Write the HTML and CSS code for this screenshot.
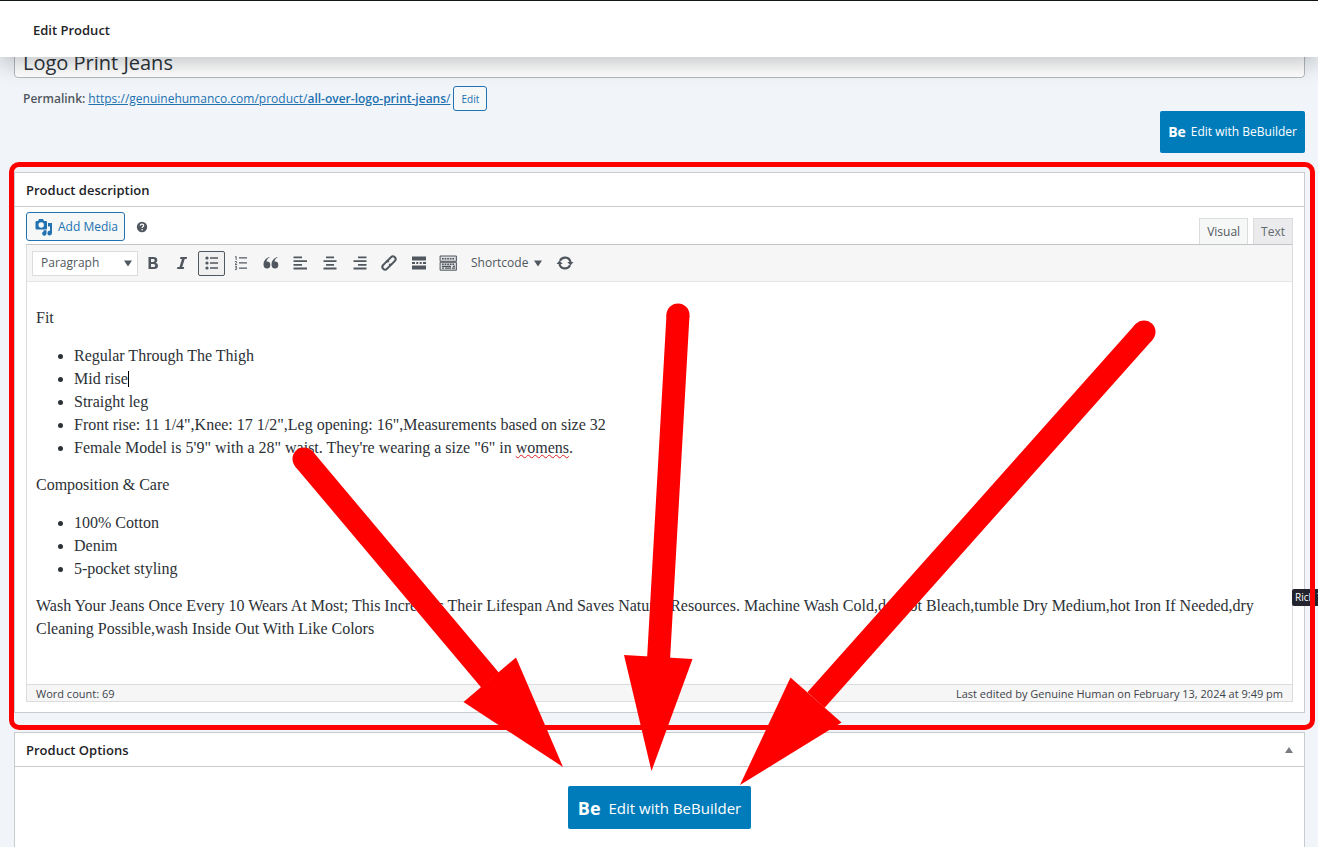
FILE: index.html
```html
<!DOCTYPE html>
<html lang="en">
<head>
<meta charset="utf-8">
<title>Edit Product</title>
<link rel="stylesheet" href="styles.css">
</head>
<body>
<div class="page">
<header class="topbar"><h1>Edit Product</h1></header>
<main class="content">
  <input class="title-input" type="text" aria-label="Product name" value="Logo Print Jeans">
  <div class="permalink">
    <strong>Permalink:</strong>
    <a href="#">https://genuinehumanco.com/product/<b>all-over-logo-print-jeans</b>/</a>
    <button class="btn btn-small" type="button">Edit</button>
  </div>
  <div class="builder-row">
    <button class="be-button" type="button"><b>Be</b><span>Edit with BeBuilder</span></button>
  </div>

  <section class="postbox description">
    <h2 class="postbox-title">Product description</h2>
    <div class="editor-wrap">
      <div class="editor-tools">
        <div class="media-buttons">
          <button class="btn btn-media" type="button">
            <svg width="18" height="18" viewBox="0 0 18 18" fill="currentColor"><path fill-rule="evenodd" d="M1.500 3H3L4 1H8L9 3H11Q12 3 12 4V10.500Q12 11.500 11 11.500H1.500Q.5 11.500 .5 10.500V4Q.5 3 1.500 3ZM6.200 4.300A2.700 2.700 0 1 0 6.200 9.700A2.700 2.700 0 1 0 6.200 4.300Z"/><path d="M13 5H17V15A2.300 2.300 0 1 1 15 12.800V8.500H13Z"/><path d="M8.500 12.300H11.500V15.500A2.200 2.200 0 1 1 8.500 13.500Z"/></svg>
            Add Media
          </button>
          <svg class="help" width="12" height="12" viewBox="0 0 12 12"><circle cx="6" cy="6" r="5.200" fill="#50575e"/><path d="M4.300 4.700Q4.400 3.200 6 3.200T7.700 4.600Q7.700 5.300 6.900 5.700T6.100 7" fill="none" stroke="#fff" stroke-width="1.200"/><circle cx="6.100" cy="8.700" r=".8" fill="#fff"/></svg>
        </div>
        <div class="tabs">
          <button class="tab active" type="button">Visual</button>
          <button class="tab" type="button">Text</button>
        </div>
      </div>
      <div class="editor">
        <div class="toolbar">
          <div class="select-wrap">
            <select aria-label="Format"><option>Paragraph</option></select>
            <svg class="caret" width="8" height="7" viewBox="0 0 8 7"><path d="M0 .5H8L4 6.500Z" fill="currentColor"/></svg>
          </div>
          <div class="tools">
            <button type="button" aria-label="Bold"><svg width="20" height="20" viewBox="0 0 20 20"><path fill-rule="evenodd" d="M5.500 4H10.500Q14.300 4 14.300 7.200Q14.300 9 12.700 9.700Q15 10.300 15 12.700Q15 16 11 16H5.500ZM8 6.100V8.900H10Q11.700 8.900 11.700 7.500T10 6.100ZM8 10.900V13.900H10.300Q12.300 13.900 12.300 12.400T10.300 10.900Z"/></svg></button>
            <button type="button" aria-label="Italic"><svg width="20" height="20" viewBox="0 0 20 20"><path d="M8.500 4H15L14.700 5.900H12.700L10.200 14.100H12.200L11.700 16H5L5.400 14.100H7.500L10 5.900H8Z"/></svg></button>
            <button class="pressed" type="button" aria-label="Bulleted list"><svg width="20" height="20" viewBox="0 0 20 20"><circle cx="5" cy="5" r="1.600"/><circle cx="5" cy="10" r="1.600"/><circle cx="5" cy="15" r="1.600"/><path d="M8 4.200H16V5.800H8ZM8 9.200H16V10.800H8ZM8 14.200H16V15.800H8Z"/></svg></button>
            <button type="button" aria-label="Numbered list"><svg width="20" height="20" viewBox="0 0 20 20"><path d="M8 4.200H16V5.500H8ZM8 9.300H16V10.600H8ZM8 14.400H16V15.700H8Z"/><path d="M4 4.200L5.200 3.400V7M3.800 8.700Q5.800 7.700 5.800 9.200Q5.800 10 4 11.400H6.200M4 13.200Q5.900 12.800 5.700 14T4.600 14.900Q6 14.900 5.800 16T3.900 16.500" fill="none" stroke="currentColor" stroke-width=".9"/></svg></button>
            <button type="button" aria-label="Blockquote"><svg width="20" height="20" viewBox="0 0 20 20"><path d="M8.700 4.300Q5.700 5.600 5.400 8.600Q9.300 8.200 9.300 12Q9.300 15.500 6 15.500Q2.500 15.500 2.500 11.200Q2.500 6 8.200 3.900ZM16.700 4.300Q13.700 5.600 13.400 8.600Q17.300 8.200 17.300 12Q17.300 15.500 14 15.500Q10.500 15.500 10.500 11.200Q10.500 6 16.200 3.900Z"/></svg></button>
            <button type="button" aria-label="Align left"><svg width="20" height="20" viewBox="0 0 20 20"><path d="M3.500 3.500H12V5.300H3.500ZM3.500 7.200H17V9H3.500ZM3.500 10.900H12V12.700H3.500ZM3.500 14.600H17V16.400H3.500Z"/></svg></button>
            <button type="button" aria-label="Align center"><svg width="20" height="20" viewBox="0 0 20 20"><path d="M6 3.500H14V5.300H6ZM3.500 7.200H16.500V9H3.500ZM6 10.900H14V12.700H6ZM3.500 14.600H16.500V16.400H3.500Z"/></svg></button>
            <button type="button" aria-label="Align right"><svg width="20" height="20" viewBox="0 0 20 20"><path d="M8 3.500H16.500V5.300H8ZM3.500 7.200H16.500V9H3.500ZM8 10.900H16.500V12.700H8ZM3.500 14.600H16.500V16.400H3.500Z"/></svg></button>
            <button type="button" aria-label="Insert link"><svg width="20" height="20" viewBox="0 0 20 20"><g transform="rotate(-45 10 10)" fill="none" stroke="currentColor" stroke-width="2"><path d="M8.500 7.300H15.500A2.700 2.700 0 0 1 15.500 12.700H11.500A2.700 2.700 0 0 1 9 11"/><path d="M11.500 12.700H4.500A2.700 2.700 0 0 1 4.500 7.300H8.500A2.700 2.700 0 0 1 11 9"/></g></svg></button>
            <button type="button" aria-label="Read more"><svg width="20" height="20" viewBox="0 0 20 20"><path d="M3 3.500H17V7.500H3ZM3 9.100H6V10.900H3ZM7.300 9.100H9.300V10.900H7.300ZM10.700 9.100H12.700V10.900H10.700ZM14 9.100H17V10.900H14ZM3 12.500H17V16.500H3Z"/></svg></button>
            <button type="button" aria-label="Toggle toolbar"><svg width="20" height="20" viewBox="0 0 20 20"><path d="M2.100 3H18.400V8.300H2.100ZM2.100 9.300H18.400V17.200H2.100Z" fill="#dcdee0" stroke="currentColor"/><path d="M4 5.700H17M4 11.300H17" fill="none" stroke="currentColor" stroke-width="1.600" stroke-dasharray="1.700 .9"/><path d="M4 13.300H13M4 15.200H6M7 15.200H13M14 15.200H17M15 13.300H17" fill="none" stroke="currentColor" stroke-width="1.200"/></svg></button>
          </div>
          <button class="shortcode" type="button">Shortcode <svg width="8" height="7" viewBox="0 0 8 7"><path d="M0 .5H8L4 6.500Z" fill="currentColor"/></svg></button>
          <button class="refresh" type="button" aria-label="Refresh"><svg width="20" height="20" viewBox="0 0 20 20"><path d="M5 7.700A5.600 5.600 0 0 1 15.500 9M15 12.300A5.600 5.600 0 0 1 4.500 11" fill="none" stroke="currentColor" stroke-width="2.200"/><path d="M12.300 9H18.500L15.500 12.600ZM7.700 11H1.500L4.500 7.400Z"/></svg></button>
        </div>
        <div class="document" contenteditable="true" spellcheck="false" role="textbox" aria-label="Product description">
          <p>Fit</p>
          <ul>
            <li>Regular Through The Thigh</li>
            <li>Mid rise<span class="text-cursor"></span></li>
            <li>Straight leg</li>
            <li>Front rise: 11 1/4",Knee: 17 1/2",Leg opening: 16",Measurements based on size 32</li>
            <li>Female Model is 5'9" with a 28" waist. They're wearing a size "6" in <span class="misspelled">womens</span>.</li>
          </ul>
          <p>Composition &amp; Care</p>
          <ul>
            <li>100% Cotton</li>
            <li>Denim</li>
            <li>5-pocket styling</li>
          </ul>
          <p>Wash Your Jeans Once Every 10 Wears At Most; This Increases Their Lifespan And Saves Natural Resources. Machine Wash Cold,do Not Bleach,tumble Dry Medium,hot Iron If Needed,dry Cleaning Possible,wash Inside Out With Like Colors</p>
        </div>
        <div class="statusbar"><span>Word count: 69</span><span>Last edited by Genuine Human on February 13, 2024 at 9:49 pm</span></div>
        <div class="tooltip">Rich Text Area</div>
      </div>
    </div>
    <div class="highlight"></div>
  </section>

  <section class="postbox options">
    <h2 class="postbox-title">Product Options
      <button class="toggle" type="button" aria-label="Toggle panel"><svg width="8" height="6" viewBox="0 0 8 6"><path d="M0 6H8L4 0Z" fill="currentColor"/></svg></button>
    </h2>
    <div class="options-body">
      <button class="be-button large" type="button"><b>Be</b><span>Edit with BeBuilder</span></button>
    </div>
  </section>
</main>
<svg class="arrows" width="1318" height="847" viewBox="0 0 1318 847" aria-hidden="true">
  <path d="M304 459L490 680M678 315L658.500 660M1144 332L816 700" stroke="#f00" stroke-width="23"/>
  <g fill="#f00">
    <circle cx="304" cy="459" r="11.500"/>
    <circle cx="678" cy="315" r="11.500"/>
    <circle cx="1144" cy="332" r="11.500"/>
    <path d="M563 767L463.500 702L516 657.500Z"/>
    <path d="M651.500 771L624 655L692.500 659Z"/>
    <path d="M740 785L790.500 677.500L841.500 722.500Z"/>
  </g>
</svg>
</div>
</body>
</html>
```
FILE: styles.css
```css
* { box-sizing: border-box; }

body {
  margin: 0;
  background: #f1f5f9;
  color: #3c434a;
  font: 12px/18px "Open Sans", "Noto Sans", sans-serif;
}

h1, h2, p, ul { margin: 0; }

button, input, select {
  font: inherit;
  color: inherit;
  margin: 0;
}

.page {
  position: relative;
  min-height: 100vh;
  overflow: hidden;
}

.topbar {
  position: absolute;
  top: 0;
  left: 0;
  right: 0;
  z-index: 2;
  display: flex;
  align-items: center;
  height: 57px;
  padding: 1px 33px 0;
  background: #fff;
  border-top: 1px solid #101517;
  box-shadow: 0 6px 22px rgba(0, 10, 20, .25);
}

.topbar h1 {
  font-size: 13px;
  font-weight: 600;
  color: #1d2327;
}

.content { padding: 44px 13px 0 14px; }

.title-input {
  display: block;
  width: 100%;
  height: 34px;
  padding: 2px 8px 0;
  border: 1px solid #b5b9be;
  border-radius: 4px;
  background: #fff;
  color: #2c3338;
  font-size: 20px;
}

.permalink {
  display: flex;
  align-items: center;
  gap: 3px;
  height: 25px;
  margin-top: 8px;
  padding-left: 9px;
  color: #50575e;
}

.permalink strong,
.permalink b { font-weight: 600; }
.permalink a { color: #2271b1; }

.btn {
  display: flex;
  align-items: center;
  justify-content: center;
  border: 1px solid #2271b1;
  border-radius: 3px;
  background: #f6f7f7;
  color: #2271b1;
}

.btn-small {
  height: 25px;
  padding: 0 7px;
  font-size: 10px;
}

.builder-row {
  display: flex;
  justify-content: flex-end;
}

.be-button {
  display: flex;
  align-items: center;
  justify-content: center;
  gap: 5px;
  height: 42px;
  padding: 0 8px;
  border: 0;
  border-radius: 2px;
  background: #007cba;
  color: #fff;
}

.be-button b { font-size: 14px; }

.be-button.large {
  height: 43px;
  padding: 0 10px;
  gap: 8px;
  font-size: 15px;
}

.be-button.large b { font-size: 18px; }

.postbox {
  position: relative;
  margin-top: 19px;
  border: 1px solid #c9cccf;
  background: #fff;
}

.postbox-title {
  display: flex;
  align-items: center;
  justify-content: space-between;
  height: 34px;
  padding: 0 11px;
  border-bottom: 1px solid #c9cccf;
  color: #1d2327;
  font-size: 13px;
  font-weight: 600;
}

.editor-wrap { padding: 5px 11px 10px; }

.editor-tools {
  display: flex;
  justify-content: space-between;
  align-items: flex-start;
}

.media-buttons {
  display: flex;
  align-items: center;
  gap: 11px;
  height: 32px;
  padding-bottom: 3px;
}

.btn-media {
  gap: 5px;
  height: 29px;
  padding: 0 6px 0 8px;
}

.tabs {
  display: flex;
  gap: 5px;
  padding-top: 6px;
}

.tab {
  height: 26px;
  padding: 0 7px;
  border: 1px solid #dcdcde;
  border-bottom: 0;
  background: #ebebed;
  color: #646970;
}

.tab.active {
  background: #f6f7f7;
  color: #50575e;
}

.editor {
  position: relative;
  border: 1px solid #dcdcde;
  border-top-color: #c3c4c7;
}

.toolbar {
  display: flex;
  align-items: center;
  height: 37px;
  padding-left: 5px;
  border-bottom: 1px solid #e4e5e7;
  background: #f6f6f6;
  color: #50575e;
}

.select-wrap { position: relative; }

.select-wrap select {
  appearance: none;
  width: 106px;
  height: 25px;
  padding: 0 8px;
  border: 1px solid #dcdcde;
  border-radius: 0;
  background: #fff;
}

.caret {
  position: absolute;
  top: 9px;
  right: 6px;
  pointer-events: none;
}

.tools {
  display: grid;
  grid-template-columns: repeat(11, 1fr);
  justify-items: center;
  width: 325px;
}

.toolbar button {
  display: flex;
  align-items: center;
  justify-content: center;
  height: 25px;
  padding: 0;
  border: 1px solid transparent;
  background: none;
  color: #50575e;
}

.tools button { width: 27px; }

.toolbar button svg { fill: currentColor; }

.toolbar .pressed {
  border-color: #50575e;
  border-radius: 2px;
  background: #f0f0f1;
}

.toolbar .shortcode {
  gap: 6px;
  margin: 0 11px 0 7px;
}

.document {
  min-height: 402px;
  padding: 24px 9px;
  outline: 0;
  color: #2c3136;
  font: 16px/23px "Liberation Serif", serif;
}

.document p { margin-bottom: 15px; }

.document ul {
  margin-bottom: 14px;
  padding-left: 38px;
}

.text-cursor {
  display: inline-block;
  width: 1px;
  height: 16px;
  background: #000;
  vertical-align: text-bottom;
}

.misspelled {
  text-decoration: underline wavy #d22 1px;
}

.statusbar {
  display: flex;
  justify-content: space-between;
  height: 17px;
  padding: 0 9px;
  border-top: 1px solid #dcdcde;
  background: #f6f6f6;
  font-size: 11px;
  line-height: 17px;
}

.tooltip {
  position: absolute;
  top: 344px;
  left: 100%;
  padding: 0 3px;
  border-radius: 2px;
  background: #24242e;
  color: #fff;
  font-size: 10px;
  line-height: 17px;
  white-space: nowrap;
}

.highlight {
  position: absolute;
  top: -11px;
  right: -11px;
  bottom: -18px;
  left: -6px;
  border: 5px solid #f00;
  border-radius: 10px;
  pointer-events: none;
}

.toggle {
  display: flex;
  padding: 0;
  border: 0;
  background: none;
  color: #787c82;
}

.options-body {
  display: flex;
  justify-content: center;
  padding: 19px 11px;
}

.arrows {
  position: absolute;
  top: 0;
  left: 0;
  z-index: 1;
  pointer-events: none;
}
```
